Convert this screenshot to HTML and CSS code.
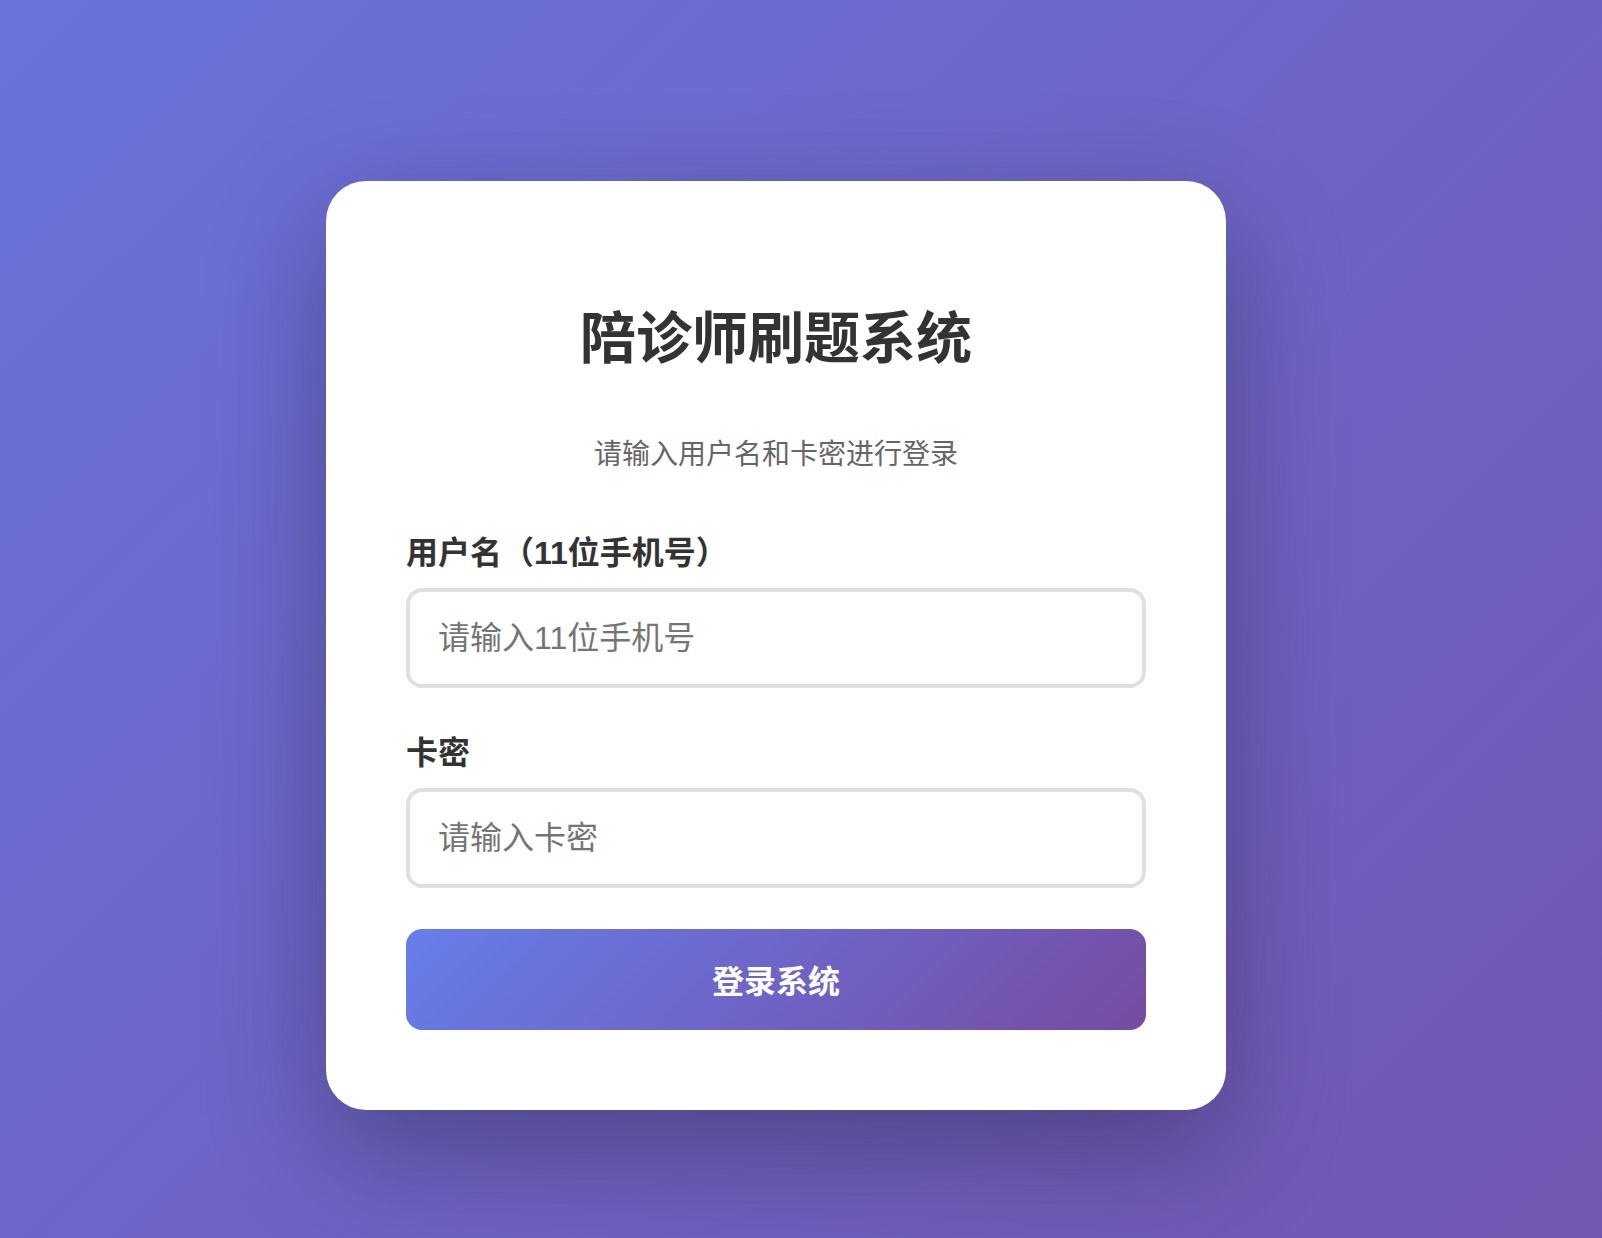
FILE: index.html
```html
<!DOCTYPE html>
<html lang="zh-CN">
<head>
<meta charset="utf-8">
<title>陪诊师刷题系统</title>
<link rel="stylesheet" href="styles.css">
</head>
<body>
<div class="page">
  <div class="card">
    <h1 class="title">陪诊师刷题系统</h1>
    <p class="subtitle">请输入用户名和卡密进行登录</p>
    <form class="form">
      <div class="group">
        <label class="label" for="u">用户名（11位手机号）</label>
        <input class="input" id="u" type="text" placeholder="请输入11位手机号">
      </div>
      <div class="group">
        <label class="label" for="p">卡密</label>
        <input class="input" id="p" type="text" placeholder="请输入卡密">
      </div>
      <button class="btn" type="button">登录系统</button>
    </form>
  </div>
</div>
</body>
</html>
```

FILE: styles.css
```css
* { box-sizing: border-box; }
html, body {
  margin: 0;
  padding: 0;
}
body {
  font-family: "Liberation Sans", "Noto Sans CJK SC", sans-serif;
  background: linear-gradient(135deg, #667eea -37%, #764ba2 139%);
  min-height: 100vh;
}
.page {
  min-height: 100vh;
  display: flex;
  justify-content: center;
  align-items: center;
  padding: 52px 50px 0 0;
}
.card {
  width: 900px;
  background: #fff;
  border-radius: 40px;
  padding: 80px;
  box-shadow: 0 40px 120px rgba(0, 0, 0, 0.3);
}
.title {
  margin: 37px 0 56px;
  font-size: 56px;
  line-height: 81px;
  font-weight: 700;
  color: #333;
  text-align: center;
}
.subtitle {
  margin: 0 0 55px;
  font-size: 28px;
  line-height: 40px;
  color: #666;
  text-align: center;
}
.form {
  display: flex;
  flex-direction: column;
}
.group {
  display: flex;
  flex-direction: column;
  margin-bottom: 42px;
}
.label {
  font-size: 32px;
  line-height: 46px;
  font-weight: 700;
  color: #333;
  margin-bottom: 12px;
}
.input {
  height: 100px;
  border: 4px solid #e0e0e0;
  border-radius: 16px;
  padding: 2px 28px 0;
  font-family: inherit;
  font-size: 32px;
  line-height: 46px;
  color: #333;
  background: #fff;
  outline: none;
}
.input::placeholder {
  color: #757575;
}
.btn {
  margin-top: -1px;
  height: 101px;
  border: none;
  border-radius: 16px;
  background: linear-gradient(135deg, #667eea 0%, #764ba2 100%);
  color: #fff;
  font-family: inherit;
  font-size: 32px;
  font-weight: 700;
  cursor: pointer;
}
```
